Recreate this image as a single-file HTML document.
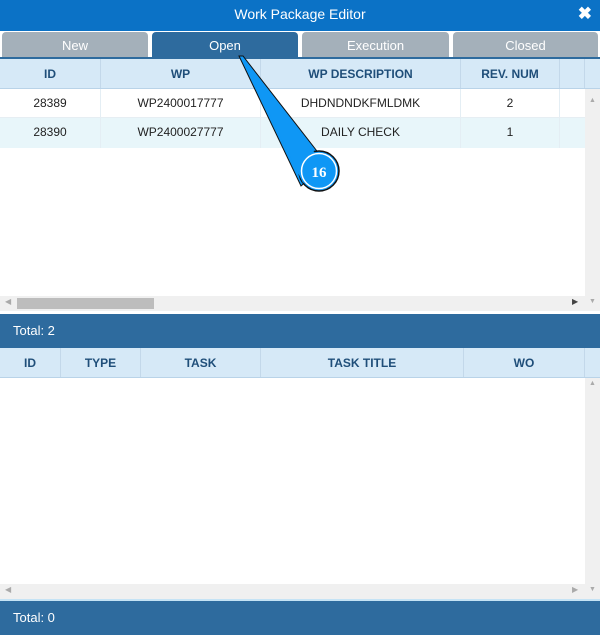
<!DOCTYPE html>
<html><head><style>
*{margin:0;padding:0;box-sizing:border-box}
body{width:600px;height:635px;overflow:hidden;background:#fff;font-family:"Liberation Sans",sans-serif;position:relative}
.abs{position:absolute}
.title{left:0;top:0;width:600px;height:31px;background:#0b72c6;color:#fff;font-size:14px;text-align:center;line-height:28px}
.tab{top:32px;height:26px;background:#a4b0ba;color:#fff;font-size:13px;text-align:center;line-height:27px;border-radius:4px 4px 0 0}
.hdr{background:#d6e9f7;color:#1f4e79;font-size:12px;font-weight:bold;height:30px;line-height:30px;text-align:center;border-bottom:1px solid #b9d3e8}
.cell{position:absolute;top:0;height:100%;border-right:1px solid #c3d8ea;text-align:center}
.row{height:29px;line-height:29px;font-size:12px;color:#222;position:absolute;left:0;width:585px}
.row .cell{border-right:1px solid #e4eef4}
.total{left:0;width:600px;background:#2e6b9e;color:#fff;font-size:13px;padding-left:13px}
.sb{background:#f0f0f0}
</style></head><body>
<div class="abs title">Work Package Editor<span style="position:absolute;right:8px;top:0;font-weight:bold;font-size:17px">✖</span></div>
<div class="abs tab" style="left:2px;width:146px">New</div>
<div class="abs tab" style="left:152px;width:146px;background:#2e6b9e">Open</div>
<div class="abs tab" style="left:302px;width:147px">Execution</div>
<div class="abs tab" style="left:453px;width:145px">Closed</div>
<div class="abs" style="left:0;top:57px;width:600px;height:2px;background:#2e6b9e"></div>
<div class="abs hdr" style="left:0;top:59px;width:600px">
<div class="cell" style="left:0;width:101px">ID</div>
<div class="cell" style="left:101px;width:160px">WP</div>
<div class="cell" style="left:261px;width:200px">WP DESCRIPTION</div>
<div class="cell" style="left:461px;width:99px">REV. NUM</div>
<div class="cell" style="left:560px;width:25px"></div>
</div>
<div class="row" style="top:89px;background:#fff;border-bottom:1px solid #e6eef3">
<div class="cell" style="left:0;width:101px">28389</div><div class="cell" style="left:101px;width:160px">WP2400017777</div><div class="cell" style="left:261px;width:200px">DHDNDNDKFMLDMK</div><div class="cell" style="left:461px;width:99px">2</div></div>
<div class="row" style="top:118px;background:#e8f6fa;height:30px">
<div class="cell" style="left:0;width:101px">28390</div><div class="cell" style="left:101px;width:160px">WP2400027777</div><div class="cell" style="left:261px;width:200px">DAILY CHECK</div><div class="cell" style="left:461px;width:99px">1</div></div>
<div class="abs sb" style="left:585px;top:89px;width:15px;height:222px"></div>
<div class="abs" style="left:589px;top:97px;font-size:7px;color:#aaa">▲</div>
<div class="abs sb" style="left:0;top:296px;width:585px;height:15px"></div>
<div class="abs" style="left:17px;top:298px;width:137px;height:11px;background:#bdbdbd"></div>
<div class="abs" style="left:5px;top:297px;font-size:8px;color:#aaa">◀</div>
<div class="abs" style="left:572px;top:297px;font-size:8px;color:#444">▶</div>
<div class="abs" style="left:589px;top:298px;font-size:7px;color:#aaa">▼</div>
<div class="abs total" style="top:314px;height:34px;line-height:34px">Total: 2</div>
<div class="abs hdr" style="left:0;top:348px;width:600px">
<div class="cell" style="left:0;width:61px">ID</div>
<div class="cell" style="left:61px;width:80px">TYPE</div>
<div class="cell" style="left:141px;width:120px">TASK</div>
<div class="cell" style="left:261px;width:203px">TASK TITLE</div>
<div class="cell" style="left:464px;width:121px">WO</div>
</div>
<div class="abs sb" style="left:585px;top:378px;width:15px;height:221px"></div>
<div class="abs" style="left:589px;top:380px;font-size:7px;color:#aaa">▲</div>
<div class="abs sb" style="left:0;top:584px;width:585px;height:15px"></div>
<div class="abs" style="left:5px;top:585px;font-size:8px;color:#aaa">◀</div>
<div class="abs" style="left:572px;top:585px;font-size:8px;color:#aaa">▶</div>
<div class="abs" style="left:589px;top:586px;font-size:7px;color:#aaa">▼</div>
<div class="abs" style="left:0;top:599px;width:600px;height:2px;background:#c5e3f5"></div>
<div class="abs total" style="top:601px;height:34px;line-height:34px">Total: 0</div>
<svg class="abs" style="left:0;top:0" width="600" height="635">
<polygon points="239,56 243,56 327,164 301,186" fill="#0f97f5" stroke="#111" stroke-width="1"/>
<circle cx="319" cy="171" r="20" fill="#0f97f5" stroke="#111" stroke-width="1.5"/>
<polygon points="242,58 325,166 303,183" fill="#0f97f5"/>
<circle cx="319" cy="171" r="17.5" fill="#0f97f5" stroke="#fff" stroke-width="1.5"/>
<text x="319" y="177" font-family="Liberation Serif,serif" font-weight="bold" font-size="15" fill="#fff" text-anchor="middle">16</text>
</svg>
</body></html>
